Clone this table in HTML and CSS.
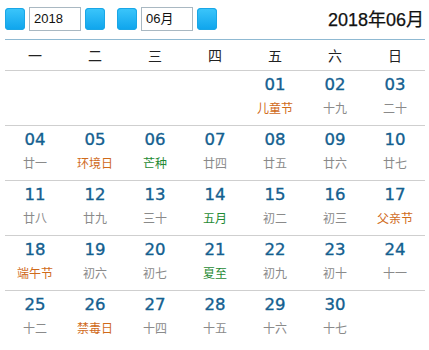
FILE: index.html
```html
<!DOCTYPE html>
<html lang="zh">
<head>
<meta charset="utf-8">
<link rel="stylesheet" href="styles.css">
</head>
<body>
<div class="cal">
  <div class="toolbar">
    <span class="btn"></span>
    <span class="input">2018</span>
    <span class="btn"></span>
    <span class="btn gap"></span>
    <span class="input">06月</span>
    <span class="btn"></span>
    <span class="title">2018年06月</span>
  </div>
  <div class="weekdays">
    <span>一</span><span>二</span><span>三</span><span>四</span><span>五</span><span>六</span><span>日</span>
  </div>
  <div class="row">
    <div class="cell"></div><div class="cell"></div><div class="cell"></div><div class="cell"></div>
    <div class="cell"><b>01</b><i class="fest">儿童节</i></div>
    <div class="cell"><b>02</b><i>十九</i></div>
    <div class="cell"><b>03</b><i>二十</i></div>
  </div>
  <div class="row">
    <div class="cell"><b>04</b><i>廿一</i></div>
    <div class="cell"><b>05</b><i class="fest">环境日</i></div>
    <div class="cell"><b>06</b><i class="term">芒种</i></div>
    <div class="cell"><b>07</b><i>廿四</i></div>
    <div class="cell"><b>08</b><i>廿五</i></div>
    <div class="cell"><b>09</b><i>廿六</i></div>
    <div class="cell"><b>10</b><i>廿七</i></div>
  </div>
  <div class="row">
    <div class="cell"><b>11</b><i>廿八</i></div>
    <div class="cell"><b>12</b><i>廿九</i></div>
    <div class="cell"><b>13</b><i>三十</i></div>
    <div class="cell"><b>14</b><i class="term">五月</i></div>
    <div class="cell"><b>15</b><i>初二</i></div>
    <div class="cell"><b>16</b><i>初三</i></div>
    <div class="cell"><b>17</b><i class="fest">父亲节</i></div>
  </div>
  <div class="row">
    <div class="cell"><b>18</b><i class="fest">端午节</i></div>
    <div class="cell"><b>19</b><i>初六</i></div>
    <div class="cell"><b>20</b><i>初七</i></div>
    <div class="cell"><b>21</b><i class="term">夏至</i></div>
    <div class="cell"><b>22</b><i>初九</i></div>
    <div class="cell"><b>23</b><i>初十</i></div>
    <div class="cell"><b>24</b><i>十一</i></div>
  </div>
  <div class="row last">
    <div class="cell"><b>25</b><i>十二</i></div>
    <div class="cell"><b>26</b><i class="fest">禁毒日</i></div>
    <div class="cell"><b>27</b><i>十四</i></div>
    <div class="cell"><b>28</b><i>十五</i></div>
    <div class="cell"><b>29</b><i>十六</i></div>
    <div class="cell"><b>30</b><i>十七</i></div>
    <div class="cell"></div>
  </div>
</div>
</body>
</html>
```
FILE: styles.css
```css
html, body {
  margin: 0;
  padding: 0;
  background: #fff;
}
.cal {
  width: 420px;
  margin-left: 5px;
  font-family: "Liberation Sans", "Noto Sans CJK SC", sans-serif;
}
.toolbar {
  display: flex;
  align-items: center;
  box-sizing: border-box;
  height: 40px;
  padding-bottom: 1px;
  border-bottom: 1px solid #8fb9d2;
}
.btn {
  width: 20px;
  height: 22px;
  border-radius: 4px;
  background: linear-gradient(#3cc6fb, #0ea4ec);
  box-shadow: inset 0 0 0 1px #1aa6e6;
  margin-right: 4px;
}
.btn.gap {
  margin-left: 8px;
}
.input {
  box-sizing: border-box;
  width: 52px;
  height: 24px;
  border: 1px solid #a9b8c2;
  margin-right: 4px;
  font-size: 13px;
  line-height: 22px;
  padding-left: 4px;
  color: #111;
}
.title {
  margin-left: auto;
  margin-right: 1px;
  margin-top: -2px;
  font-size: 18px;
  color: #111;
  -webkit-text-stroke: 0.25px #111;
}
.weekdays {
  display: grid;
  grid-template-columns: repeat(7, 60px);
  height: 30px;
  border-bottom: 1px solid #cfcfcf;
  align-items: center;
  text-align: center;
  font-size: 14px;
  color: #222;
}
.row {
  display: grid;
  grid-template-columns: repeat(7, 60px);
  height: 54px;
  border-bottom: 1px solid #cfcfcf;
}
.row.last {
  border-bottom: none;
}
.cell {
  display: flex;
  flex-direction: column;
  align-items: center;
}
.cell b {
  margin-top: 4px;
  height: 20px;
  line-height: 20px;
  font-family: "DejaVu Sans", sans-serif;
  font-weight: normal;
  font-size: 16.5px;
  color: #145f90;
  -webkit-text-stroke: 0.35px #145f90;
}
.cell i {
  margin-top: 5px;
  font-style: normal;
  font-size: 12px;
  line-height: 18px;
  color: #8a8a8a;
}
.cell i.fest {
  color: #d06a1a;
}
.cell i.term {
  color: #1f8a35;
}
```
